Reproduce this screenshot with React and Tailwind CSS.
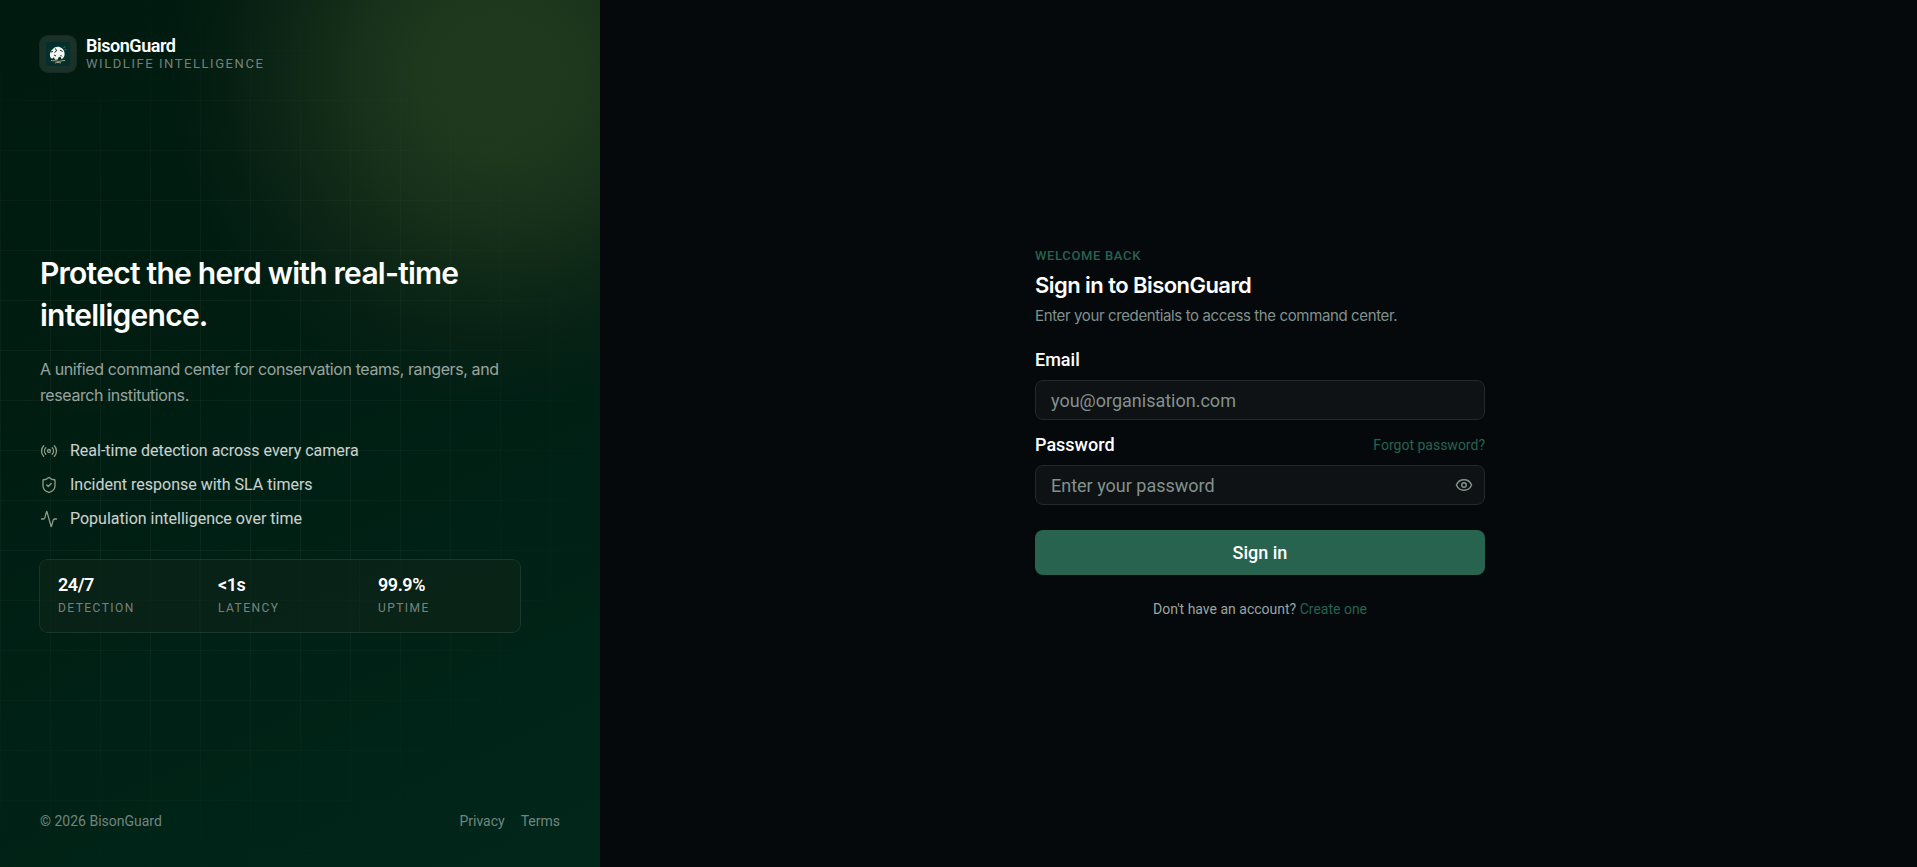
import { useState } from 'react';
import { Activity, Eye, EyeOff, Radio, ShieldCheck } from 'lucide-react';

const features = [
  { icon: Radio, label: 'Real-time detection across every camera' },
  { icon: ShieldCheck, label: 'Incident response with SLA timers' },
  { icon: Activity, label: 'Population intelligence over time' },
];

const stats = [
  { value: '24/7', label: 'Detection' },
  { value: '<1s', label: 'Latency' },
  { value: '99.9%', label: 'Uptime' },
];

function BisonLogo() {
  return (
    <svg viewBox="0 0 24 24" className="size-6" aria-hidden="true">
      <rect width="24" height="24" fill="#03302c" />
      <path d="M4 14c-.4-3 .6-5.500 3-7 1.500-2 4.500-2.600 7-1.800 3 1 4.600 3.600 4.600 6.800 0 2.400-1 4.200-3 5.200l-1.200-2.600-1.800.6-.8 2.400-2.800.2-1-2.600-1.800 1.600c-1-.6-2-1.400-2.200-2.800z" fill="#f3f6f1" />
      <path d="M4.500 10l2.500-.5M9.500 6.500l1 2.500-2 1.500M14 8l2.500 1.500M8 13l2 1M14.500 13l1.500 1.500" stroke="#03302c" strokeWidth="1" fill="none" />
      <path d="M5 18.500c2 .8 4-.4 6 .6 3 1 5-1 8-.6M9 21c2-.8 4-.6 6 0" stroke="#b9b58c" strokeWidth="0.9" fill="none" />
      <path d="M17.500 5.500l2-.8M18.500 8l1.600-.6" stroke="#4e8a72" strokeWidth="0.8" fill="none" />
    </svg>
  );
}

function BrandPanel() {
  return (
    <aside className="relative flex w-[600px] shrink-0 flex-col justify-between overflow-hidden bg-[linear-gradient(155deg,#001a0f_0%,#001d12_40%,#01271a_100%)] px-10 py-9">
      {/* glow and grid behind the content */}
      <div className="absolute inset-0 bg-[radial-gradient(circle_at_500px_75px,#1e391e_0px,#1d381d_80px,#1b351ce6_130px,#1a321bb3_180px,#182e1a77_230px,#15291840_275px,transparent_330px)]" />
      <div className="absolute inset-0 bg-[linear-gradient(to_right,#ffffff0a_1px,transparent_1px),linear-gradient(to_bottom,#ffffff0a_1px,transparent_1px)] bg-[size:50px_50px] mask-[radial-gradient(ellipse_at_30%_50%,black_25%,transparent_80%)]" />

      <div className="relative flex items-center gap-2.5">
        <div className="flex size-9 items-center justify-center rounded-lg bg-white/10 ring-1 ring-white/8">
          <BisonLogo />
        </div>
        <div>
          <p className="text-lg leading-5 font-semibold tracking-tight text-white">BisonGuard</p>
          <p className="text-[13px] leading-4 tracking-[0.12em] text-white/45 uppercase">Wildlife Intelligence</p>
        </div>
      </div>

      <div className="relative max-w-[480px]">
        <h2 className="font-['Inter',sans-serif] text-3xl leading-[42px] font-semibold tracking-tight text-white">
          Protect the herd with real-time intelligence.
        </h2>
        <p className="mt-5 font-['Inter',sans-serif] text-base leading-[26px] tracking-tight text-white/60">
          A unified command center for conservation teams, rangers, and research institutions.
        </p>
        <ul className="mt-8 space-y-3">
          {features.map(({ icon: Icon, label }) => (
            <li key={label} className="flex items-center gap-3 text-base leading-[22px] text-white/80">
              <Icon className="size-[18px] text-[#8f9d86]" strokeWidth={1.75} />
              {label}
            </li>
          ))}
        </ul>
        <dl className="mt-[30px] grid grid-cols-3 divide-x divide-white/2 overflow-hidden rounded-lg bg-[#0d2318]/70 ring-1 ring-white/10">
          {stats.map((stat) => (
            <div key={stat.label} className="flex flex-col-reverse px-[18px] py-3">
              <dt className="text-xs leading-[23px] tracking-[0.12em] text-white/45 uppercase">{stat.label}</dt>
              <dd className="text-lg leading-[25px] font-semibold tracking-tight text-white">{stat.value}</dd>
            </div>
          ))}
        </dl>
      </div>

      <div className="relative flex justify-between text-sm leading-5 text-white/45">
        <p>© 2026 BisonGuard</p>
        <nav className="flex gap-4">
          <a href="#privacy">Privacy</a>
          <a href="#terms">Terms</a>
        </nav>
      </div>
    </aside>
  );
}

function SignInForm() {
  const [email, setEmail] = useState('');
  const [password, setPassword] = useState('');
  const [showPassword, setShowPassword] = useState(false);

  const inputClass =
    'block h-10 w-full rounded-lg border border-[#24282a] bg-[#0e1214] px-[15px] text-lg text-white placeholder:text-[#82918d] focus:outline-none focus:border-[#27634f]';

  return (
    <div className="w-full max-w-[450px]">
      <p className="text-[13px] leading-4 font-medium tracking-wider text-[#27634f] uppercase">Welcome back</p>
      <h1 className="mt-1.5 font-['Inter',sans-serif] text-[22px] leading-[30px] font-semibold tracking-tight text-white">Sign in to BisonGuard</h1>
      <p className="mt-1 font-['Inter',sans-serif] text-[15px] leading-6 tracking-tight text-[#82918d]">Enter your credentials to access the command center.</p>

      <form onSubmit={(e) => e.preventDefault()} className="mt-5">
        <label htmlFor="email" className="block text-lg leading-6 font-medium text-white">Email</label>
        <div className="mt-2">
          <input id="email" type="email" className={inputClass} value={email} onChange={(e) => setEmail(e.target.value)} placeholder="you@organisation.com" />
        </div>

        <div className="mt-[13px] flex items-center justify-between">
          <label htmlFor="password" className="text-lg leading-6 font-medium text-white">Password</label>
          <a href="#forgot" className="text-sm leading-5 text-[#27634f]">Forgot password?</a>
        </div>
        <div className="relative mt-2">
          <input id="password" type={showPassword ? 'text' : 'password'} className={inputClass} value={password} onChange={(e) => setPassword(e.target.value)} placeholder="Enter your password" />
          <button type="button" aria-label="Toggle password visibility" onClick={() => setShowPassword(!showPassword)} className="absolute inset-y-0 right-3 text-[#82918d]">
            {showPassword ? <EyeOff className="size-[18px]" /> : <Eye className="size-[18px]" />}
          </button>
        </div>

        <button type="submit" className="mt-[25px] h-[45px] w-full rounded-lg bg-[#27634f] text-lg font-medium text-white">Sign in</button>
      </form>

      <p className="mt-6 text-center text-sm leading-5 text-[#9aa5a0]">
        Don't have an account? <a href="#register" className="text-[#27634f]">Create one</a>
      </p>
    </div>
  );
}

export default function App() {
  return (
    <div className="flex min-h-screen bg-[#05090c] font-['Roboto',sans-serif]">
      <BrandPanel />
      <main className="flex flex-1 items-center justify-center pr-[37px] pl-10">
        <SignInForm />
      </main>
    </div>
  );
}
